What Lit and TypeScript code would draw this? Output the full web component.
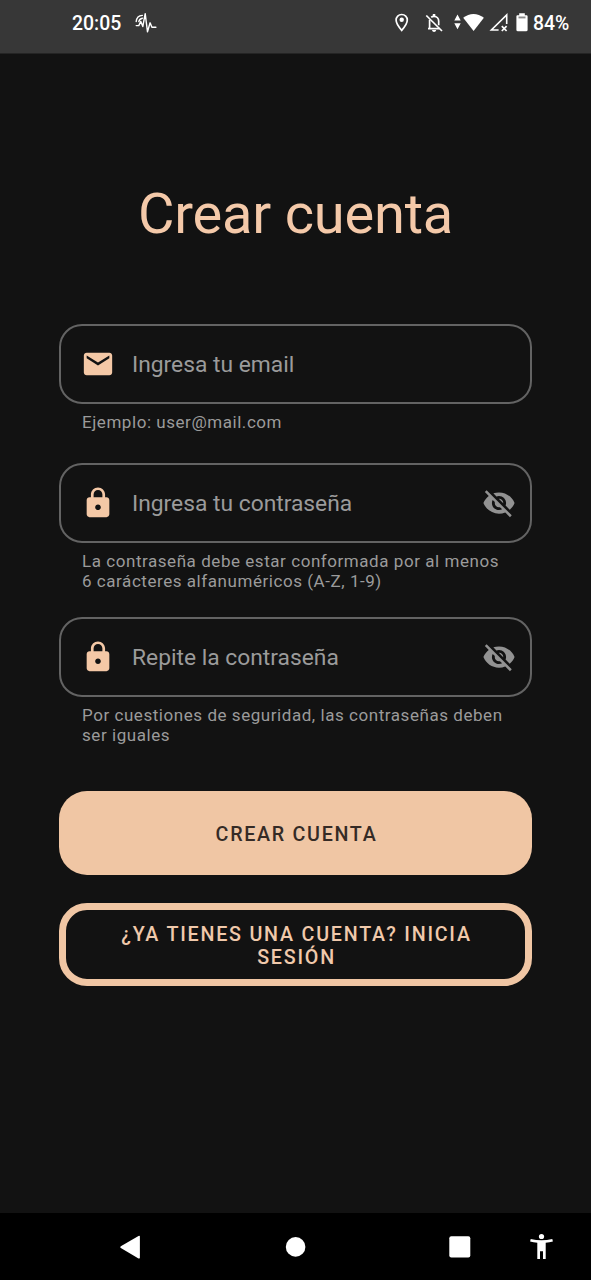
import { LitElement, html, css, svg, nothing } from "lit";
import { customElement, property } from "lit/decorators.js";

@customElement("status-bar")
class StatusBar extends LitElement {
  static styles = css`
    :host {
      display: flex;
      box-sizing: border-box;
      height: 54px;
      padding: 0 22px 8px 72px;
      align-items: center;
      background: #373737;
      border-bottom: 1px solid #242424;
      color: #fff;
      font: 500 19.4px/24px Roboto, sans-serif;
    }
    .time { width: 49px; padding-top: 2px; white-space: nowrap; }
    .pulse { margin-left: 14px; }
    .icons { margin-left: auto; }
    .battery { width: 36px; margin-left: 4px; padding-top: 2px; white-space: nowrap; }
    svg { display: block; }
  `;
  render() {
    return html`
      <span class="time">20:05</span>
      <svg class="pulse" width="24" height="24" viewBox="0 0 24 24" fill="none" stroke="#fff" stroke-width="1.4" stroke-linejoin="round" stroke-linecap="round">
        <path d="M1.2 14.6h2.6l2-4.2 2 5.200L10.200 2.600l2.300 18.200 2.600-9 1.800 4.400h4" />
        <path d="M1.200 10.500C1.600 6.600 4 4.600 7.400 4.400M3.800 10.600C4.200 8.600 5.300 7.500 7.400 7.200" />
      </svg>
      <svg class="icons" width="138" height="24" viewBox="0 0 138 24" fill="#fff">
        <path fill="none" stroke="#fff" stroke-width="1.7" d="M10.700 3.500c-3.200 0-5.600 2.400-5.600 5.600 0 4 5.600 10.300 5.600 10.300s5.600-6.300 5.600-10.300c0-3.200-2.400-5.600-5.600-5.600z" />
        <circle cx="10.700" cy="8.800" r="2.200" />
        <g fill="none" stroke="#fff" stroke-width="1.700">
          <path d="M40.200 6.300c.8-.6 1.700-.9 2.800-.9 2.900 0 4.700 2.200 4.700 4.900v4M38.600 8.800v8.400M37 17.700h11.500" />
          <path d="M35.300 4.500l15.700 15.500" />
        </g>
        <path d="M41.800 3h2.500v3h-2.500zM41 19h4.200c-.2 1.200-1 2-2.100 2s-1.900-.8-2.100-2z" />
        <path d="M66.500 3.500l3.200 6h-6.400zM66.500 18.200l3.200-6h-6.400z" />
        <path d="M72.200 6.700C78.500 1.600 86.500 1.600 92.900 6.700L82.600 20z" />
        <path fill="none" stroke="#fff" stroke-width="1.600" d="M107.600 19h-7.200L115.700 4v9" />
        <path fill="none" stroke="#fff" stroke-width="1.700" d="M110.800 15.200l4.800 4.800M115.600 15.200l-4.800 4.800" />
        <path d="M128.200 2.300h5.600v2h1.600c.7 0 1.200.5 1.200 1.200v13.600c0 .7-.5 1.200-1.200 1.200h-8.800c-.7 0-1.200-.5-1.200-1.200V5.500c0-.7.500-1.200 1.200-1.200h1.600z" />
        <path fill="#8a8a8a" d="M127.500 5.500h7v1.900h-7z" />
      </svg>
      <span class="battery">84%</span>
    `;
  }
}

const mail = svg`<path d="M20 4H4c-1.100 0-1.990.9-1.990 2L2 18c0 1.100.9 2 2 2h16c1.100 0 2-.9 2-2V6c0-1.100-.9-2-2-2zm0 4l-8 5-8-5V6l8 5 8-5v2z"/>`;
const lock = svg`<path d="M18 8h-1V6c0-2.760-2.240-5-5-5S7 3.240 7 6v2H6c-1.100 0-2 .9-2 2v10c0 1.100.9 2 2 2h12c1.100 0 2-.9 2-2V10c0-1.100-.9-2-2-2zm-6 9c-1.100 0-2-.9-2-2s.9-2 2-2 2 .9 2 2-.9 2-2 2zm3.100-9H8.900V6c0-1.710 1.390-3.100 3.100-3.100 1.710 0 3.100 1.390 3.100 3.100v2z"/>`;
const eyeOff = svg`<path d="M12 7c2.760 0 5 2.240 5 5 0 .65-.13 1.260-.36 1.830l2.920 2.920c1.510-1.260 2.700-2.890 3.430-4.750-1.730-4.390-6-7.500-11-7.500-1.400 0-2.740.25-3.980.7l2.160 2.160C10.740 7.130 11.350 7 12 7zM2 4.270l2.280 2.280.46.46C3.080 8.300 1.780 10.020 1 12c1.730 4.390 6 7.500 11 7.500 1.550 0 3.030-.3 4.380-.84l.42.42L19.730 22 21 20.730 3.270 3 2 4.270zM7.530 9.800l1.550 1.550c-.05.21-.08.43-.08.65 0 1.660 1.340 3 3 3 .22 0 .44-.03.65-.08l1.550 1.550c-.67.33-1.410.53-2.200.53-2.760 0-5-2.240-5-5 0-.79.2-1.530.53-2.200zm4.310-.78l3.150 3.150.02-.16c0-1.660-1.340-3-3-3l-.17.01z"/>`;

@customElement("form-field")
class FormField extends LitElement {
  @property() label = "";
  @property() icon = "";
  @property({ type: Array }) hint: string[] = [];
  static styles = css`
    :host { display: block; font-family: Roboto, sans-serif; color: #9b9b9b; }
    .box {
      display: flex;
      align-items: center;
      box-sizing: border-box;
      height: 80px;
      padding: 0 14.500px 0 20px;
      border: 2px solid #636363;
      border-radius: 23px;
    }
    svg { flex: none; width: 34px; height: 34px; }
    .lead { fill: #f4c8a6; }
    .trail { fill: #929292; }
    .label { flex: 1; padding: 1px 0 0 17px; font-size: 22.8px; line-height: 28px; white-space: nowrap; }
    .hint { padding: 8px 0 0 23px; font-size: 17px; line-height: 20px; letter-spacing: 0.55px; white-space: nowrap; }
    .line { display: block; }
  `;
  render() {
    const secret = this.icon === "lock";
    return html`
      <div class="box">
        <svg class="lead" viewBox="0 0 24 24">${secret ? lock : mail}</svg>
        <span class="label">${this.label}</span>
        ${secret ? html`<svg class="trail" viewBox="0 0 24 24">${eyeOff}</svg>` : nothing}
      </div>
      <div class="hint">${this.hint.map((t) => html`<span class="line">${t}</span>`)}</div>
    `;
  }
}

@customElement("nav-bar")
class NavBar extends LitElement {
  static styles = css`
    :host { display: block; height: 67px; background: #000; }
    svg { display: block; }
  `;
  render() {
    return html`
      <svg width="591" height="67" viewBox="0 0 591 67" fill="#fff">
        <path d="M120.800 33.200L138.500 23q1.400-.6 1.400.8v20.800q0 1.400-1.400.8L120.800 35q-1.200-.9 0-1.800z" />
        <circle cx="295.600" cy="33.900" r="9.800" />
        <rect x="449.300" y="23.200" width="21" height="21.300" rx="2" />
        <circle cx="541.500" cy="23.500" r="2.600" />
        <path d="M530.700 26.100q10.800 2.400 21.600 0l.6 2.300q-3.400.9-7.200 1.300v16.300h-2.700v-7.800h-3v7.800h-2.700V29.700q-3.800-.4-7.200-1.300z" />
      </svg>
    `;
  }
}

@customElement("app-root")
class AppRoot extends LitElement {
  static styles = css`
    :host {
      display: flex;
      flex-direction: column;
      width: 591px;
      height: 1280px;
      overflow: hidden;
      background: #121212;
      font-family: Roboto, sans-serif;
    }
    main { flex: 1; padding: 0 59px; }
    h1 {
      margin: 127px 0 76px;
      text-align: center;
      font-weight: 400;
      font-size: 56px;
      line-height: 67px;
      letter-spacing: -0.2px;
      color: #f4c9a9;
      white-space: nowrap;
    }
    .email { margin-bottom: 31px; }
    .pass { margin-bottom: 26px; }
    .repeat { margin-bottom: 46px; }
    button {
      display: flex;
      align-items: center;
      justify-content: center;
      box-sizing: border-box;
      width: 473px;
      height: 84px;
      margin: 0;
      padding: 2px 0 0 2px;
      border: 0;
      border-radius: 28px;
      background: #f0c6a4;
      color: #352b26;
      font: 500 19.700px/23px Roboto, sans-serif;
      letter-spacing: 1.7px;
    }
    .outline {
      margin-top: 28px;
      height: 83px;
      border: 7px solid #f0c6a4;
      background: none;
      color: #f0c9ab;
      letter-spacing: 1.78px;
    }
  `;
  render() {
    return html`
      <status-bar></status-bar>
      <main>
        <h1>Crear cuenta</h1>
        <form-field class="email" icon="mail" label="Ingresa tu email" .hint=${["Ejemplo: user@mail.com"]}></form-field>
        <form-field class="pass" icon="lock" label="Ingresa tu contraseña"
          .hint=${["La contraseña debe estar conformada por al menos", "6 carácteres alfanuméricos (A-Z, 1-9)"]}></form-field>
        <form-field class="repeat" icon="lock" label="Repite la contraseña"
          .hint=${["Por cuestiones de seguridad, las contraseñas deben", "ser iguales"]}></form-field>
        <button>CREAR CUENTA</button>
        <button class="outline"><span>¿YA TIENES UNA CUENTA? INICIA<br />SESIÓN</span></button>
      </main>
      <nav-bar></nav-bar>
    `;
  }
}
